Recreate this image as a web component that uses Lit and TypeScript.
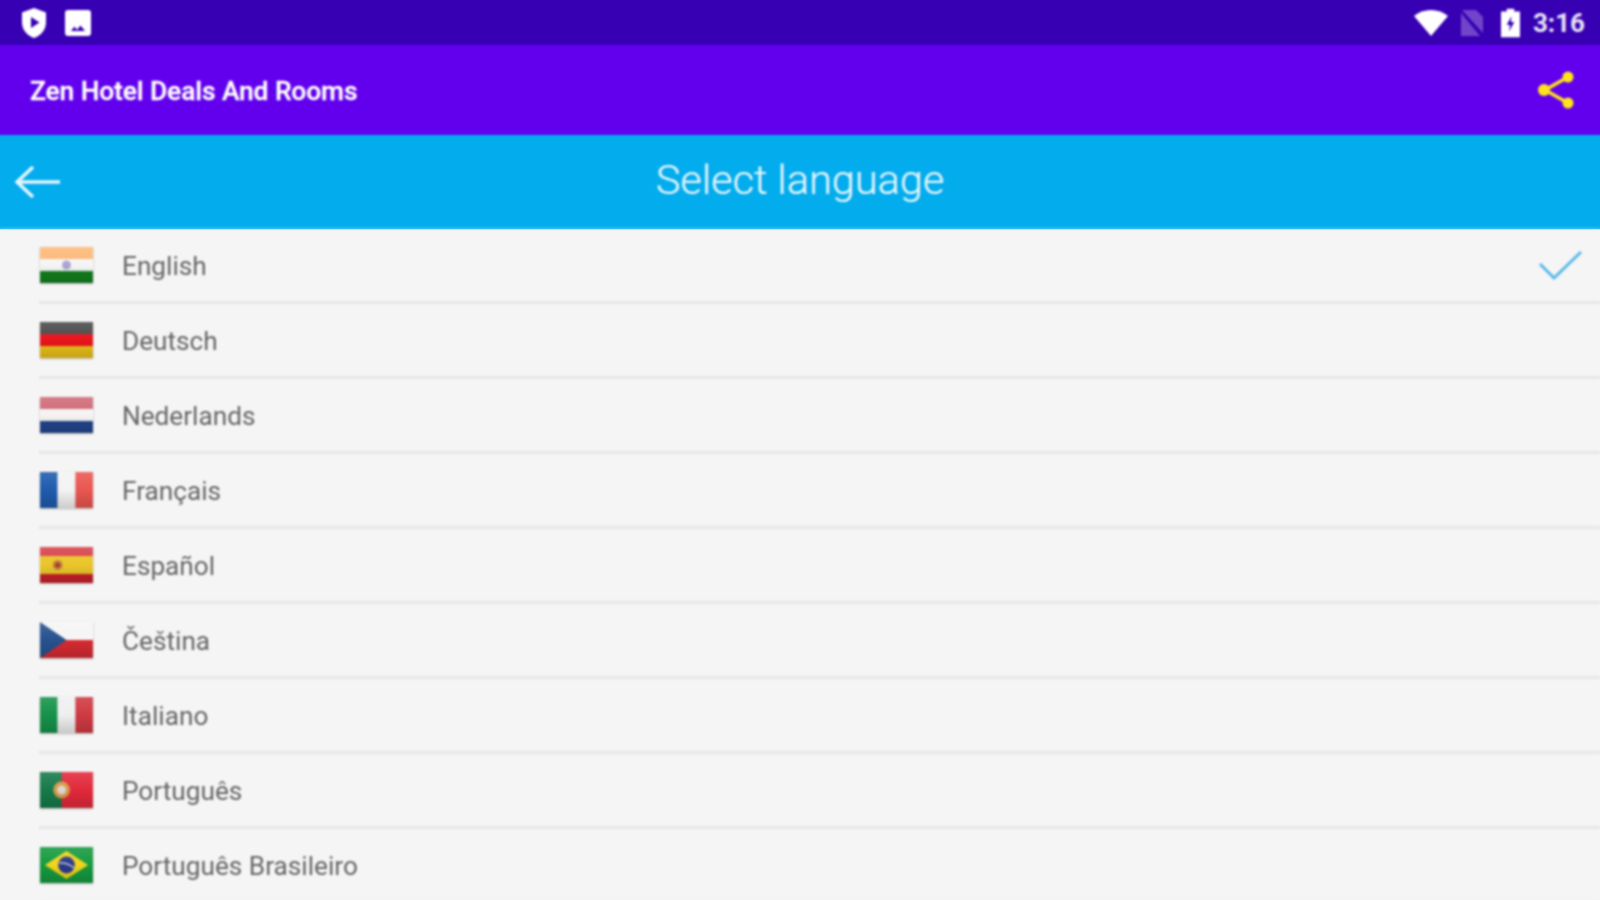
import { LitElement, html, css, svg } from "lit";
import { customElement } from "lit/decorators.js";

const stripesH = (cols: string[]) => svg`${cols.map((c, i) => svg`<rect x="0" y=${(i * 36) / cols.length} width="54" height=${36 / cols.length} fill=${c} />`)}`;
const stripesV = (cols: string[]) => svg`${cols.map((c, i) => svg`<rect x=${(i * 54) / cols.length} y="0" width=${54 / cols.length} height="36" fill=${c} />`)}`;

const flags: Record<string, unknown> = {
  in: svg`${stripesH(["#fdb877", "#f5f5f5", "#14801f"])}<circle cx="27" cy="18" r="4.5" fill="#a9a6d4" />`,
  de: stripesH(["#4a4a4a", "#e8141c", "#eac11a"]),
  nl: svg`${stripesH(["#cf6b78", "#f6f3f3", "#23458f"])}`,
  fr: stripesV(["#1f5bad", "#f3f3f3", "#ea5650"]),
  es: svg`<rect width="54" height="36" fill="#eac52a" /><rect width="54" height="9" fill="#d8414a" /><rect y="27" width="54" height="9" fill="#c8202a" /><circle cx="18" cy="18" r="5" fill="#c0803a" /><circle cx="18" cy="18" r="2.5" fill="#a8382c" />`,
  cz: svg`<rect width="54" height="18" fill="#f5f5f5" /><rect y="18" width="54" height="18" fill="#d62b33" /><path d="M0 0 L27 18 L0 36 Z" fill="#27528f" />`,
  it: stripesV(["#16924a", "#efefef", "#cf3a42"]),
  pt: svg`<rect width="54" height="36" fill="#e2293a" /><rect width="22" height="36" fill="#167a4a" /><circle cx="22" cy="18" r="8.5" fill="#d99a4a" /><circle cx="22" cy="18" r="4.5" fill="#ddd6d0" />`,
  br: svg`<rect width="54" height="36" fill="#169a3f" /><path d="M27 4 L49 18 L27 32 L5 18 Z" fill="#f2d41c" /><circle cx="27" cy="18" r="8.5" fill="#2b3a8c" /><path d="M19 16 Q27 15 35 21" stroke="#ddd" stroke-width="1.2" fill="none" />`,
};

const rows: [string, string][] = [
  ["in", "English"],
  ["de", "Deutsch"],
  ["nl", "Nederlands"],
  ["fr", "Français"],
  ["es", "Español"],
  ["cz", "Čeština"],
  ["it", "Italiano"],
  ["pt", "Português"],
  ["br", "Português Brasileiro"],
];

@customElement("app-root")
export class AppRoot extends LitElement {
  static styles = css`
    :host { display: block; width: 1600px; height: 900px; overflow: hidden; font-family: Roboto, sans-serif;
      background: linear-gradient(#3700b3 0 45px, #6200ee 45px 135px, #03aced 135px 229px, #f5f5f5 229px); }
    .page { filter: blur(0.8px); }
    .status { height: 45px; background: #3700b3; display: flex; align-items: center; padding: 0 15px 0 21px; color: #fff; }
    .status .left { display: flex; gap: 18px; flex: 1; align-items: center; }
    .status .right { display: flex; align-items: center; gap: 0; }
    .time { font-size: 26px; font-weight: 700; color: #e8e4f6; margin-left: 13px; }
    .appbar { height: 90px; background: #6200ee; display: flex; align-items: center; justify-content: space-between; padding: 0 26px 0 30px; box-sizing: border-box; }
    .appbar .name { color: #fff; font-size: 26.2px; font-weight: 500; -webkit-text-stroke: 0.3px #fff; padding-top: 1px; }
    .head { height: 94px; background: #03aced; position: relative; display: flex; align-items: center; justify-content: center; box-sizing: border-box; border-bottom: 1px solid #7fd3f5; padding-bottom: 4px; }
    .head .title { color: #e6f6fd; font-size: 41.5px; font-weight: 300; -webkit-text-stroke: 0.2px #e6f6fd; }
    .back { position: absolute; left: 15px; top: 31px; }
    .row { height: 75px; display: flex; align-items: center; margin-left: 39px; box-sizing: border-box; border-bottom: 3px solid #e6e6e6; position: relative; }
    .flag { width: 53px; height: 36px; display: block; flex: none; }
    .flagwrap { position: relative; width: 53px; height: 36px; flex: none; margin-left: 1px; box-shadow: 0 1px 2px rgba(0,0,0,.25); }
    .flagwrap::after { content: ""; position: absolute; inset: 0; background: linear-gradient(rgba(255,255,255,.12), rgba(255,255,255,0) 50%, rgba(0,0,0,.16)); }
    .label { margin-left: 29px; font-size: 26.2px; color: #666; flex: 1; padding-top: 1px; }
    .check { position: absolute; right: 17px; top: 21px; }
  `;

  render() {
    return html`<div class="page">
      <div class="status">
        <div class="left">
          <svg width="26" height="32" viewBox="0 0 26 32"><path d="M13 1 L25 5.5 V15 C25 23 20 28.5 13 31 C6 28.5 1 23 1 15 V5.5 Z" fill="#fff"/><path d="M10 10 L18.5 15.5 L10 21 Z" fill="#3700b3"/></svg>
          <svg width="26" height="26" viewBox="0 0 26 26"><rect width="26" height="26" rx="3" fill="#fff"/><path d="M6 21 L9.5 16.5 L12 20 L15.5 15.5 L20 21 Z" fill="#3700b3"/></svg>
        </div>
        <div class="right">
          <svg width="34" height="26" viewBox="0 0 34 26"><path d="M0 6 C9 -2 25 -2 34 6 L17 26 Z" fill="#fff"/></svg>
          <svg style="margin-left:12px" width="24" height="28" viewBox="0 0 24 28"><path d="M2 1 H16 L23 8 V24 L2 1 Z M1 4 L20 27 H1 Z" fill="#7145c9"/></svg>
          <svg style="margin-left:17px" width="19" height="30" viewBox="0 0 20 30"><path d="M6 0 H14 V3 H20 V30 H0 V3 H6 Z" fill="#fff"/><path d="M11 8 L6 17 H9.5 L8.5 24 L14 14 H10.5 Z" fill="#3700b3"/></svg>
          <span class="time">3:16</span>
        </div>
      </div>
      <div class="appbar">
        <span class="name">Zen Hotel Deals And Rooms</span>
        <svg width="36" height="40" viewBox="0 0 36 40"><path d="M30 7 L7 20 L30 33" fill="none" stroke="#ffe31a" stroke-width="3.5"/><circle cx="30" cy="7" r="5.5" fill="#ffe31a"/><circle cx="6" cy="20" r="6" fill="#ffe31a"/><circle cx="30" cy="33" r="5.5" fill="#ffe31a"/></svg>
      </div>
      <div class="head">
        <svg class="back" width="46" height="32" viewBox="0 0 46 32"><path d="M45 16 H3 M18 1 L2 16 L18 31" fill="none" stroke="#e2f5fd" stroke-width="3.6"/></svg>
        <span class="title">Select language</span>
      </div>
      ${rows.map(([f, name], i) => html`<div class="row">
        <div class="flagwrap"><svg class="flag" viewBox="0 0 54 36" preserveAspectRatio="none">${flags[f]}</svg></div>
        <span class="label">${name}</span>
        ${i === 0 ? html`<svg class="check" width="44" height="32" viewBox="0 0 44 32"><path d="M1 14 L15 28 L42 2" fill="none" stroke="#5bb8ea" stroke-width="3"/></svg>` : null}
      </div>`)}
    </div>`;
  }
}
